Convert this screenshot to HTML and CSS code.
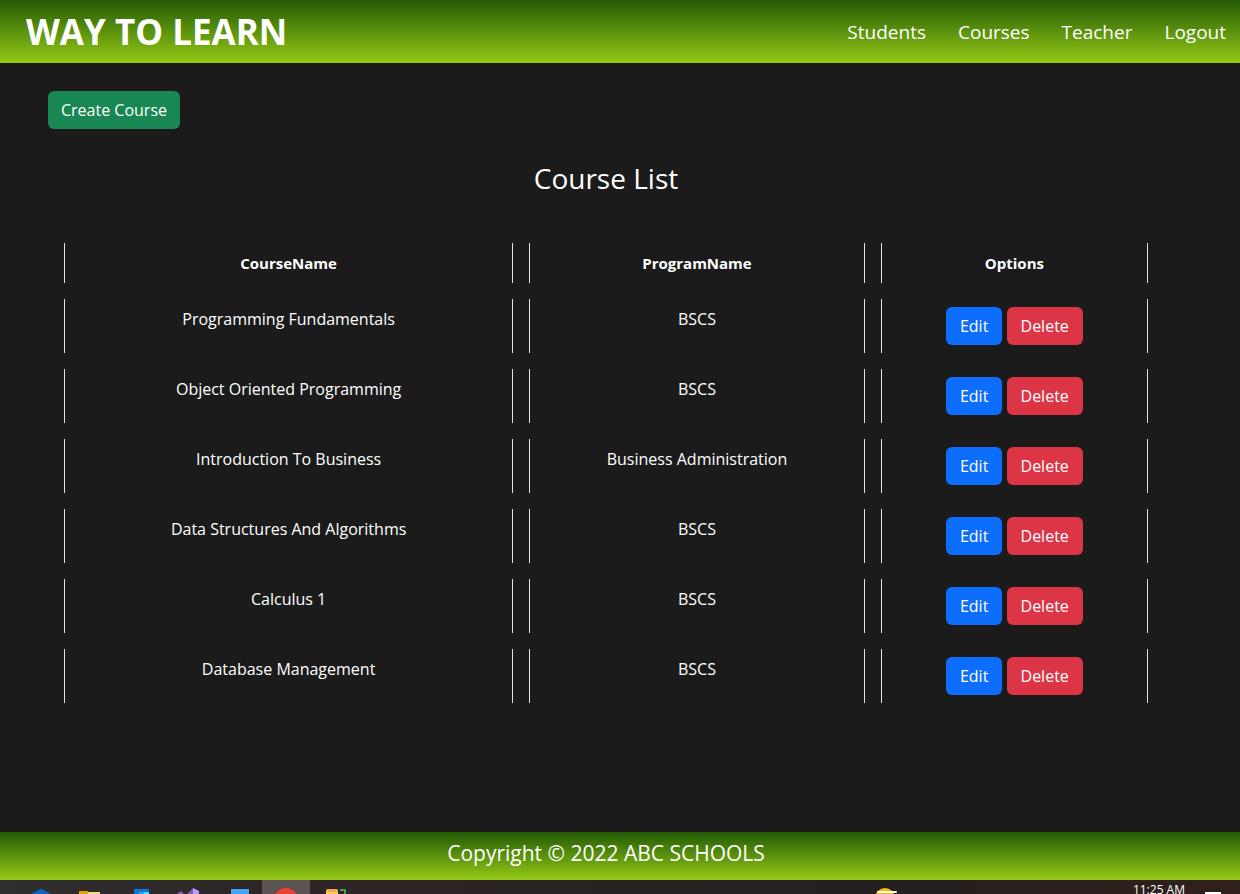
FILE: index.html
```html
<!DOCTYPE html>
<html lang="en">
<head>
<meta charset="utf-8">
<title>Course List</title>
<link rel="stylesheet" href="styles.css">
</head>
<body>
<header class="site-header">
  <h1 class="brand">WAY TO LEARN</h1>
  <nav class="site-nav">
    <a href="#">Students</a>
    <a href="#">Courses</a>
    <a href="#">Teacher</a>
    <a href="#">Logout</a>
  </nav>
</header>
<main class="content">
  <button class="btn btn-success" type="button">Create Course</button>
  <h2 class="page-title">Course List</h2>
  <table class="courses">
    <colgroup><col class="col-course"><col class="col-program"><col></colgroup>
    <thead>
      <tr><th>CourseName</th><th>ProgramName</th><th>Options</th></tr>
    </thead>
    <tbody>
      <tr><td>Programming Fundamentals</td><td>BSCS</td><td><button class="btn btn-primary" type="button">Edit</button> <button class="btn btn-danger" type="button">Delete</button></td></tr>
      <tr><td>Object Oriented Programming</td><td>BSCS</td><td><button class="btn btn-primary" type="button">Edit</button> <button class="btn btn-danger" type="button">Delete</button></td></tr>
      <tr><td>Introduction To Business</td><td>Business Administration</td><td><button class="btn btn-primary" type="button">Edit</button> <button class="btn btn-danger" type="button">Delete</button></td></tr>
      <tr><td>Data Structures And Algorithms</td><td>BSCS</td><td><button class="btn btn-primary" type="button">Edit</button> <button class="btn btn-danger" type="button">Delete</button></td></tr>
      <tr><td>Calculus 1</td><td>BSCS</td><td><button class="btn btn-primary" type="button">Edit</button> <button class="btn btn-danger" type="button">Delete</button></td></tr>
      <tr><td>Database Management</td><td>BSCS</td><td><button class="btn btn-primary" type="button">Edit</button> <button class="btn btn-danger" type="button">Delete</button></td></tr>
    </tbody>
  </table>
</main>
<footer class="site-footer">Copyright © 2022 ABC SCHOOLS</footer>
<div class="taskbar">
  <div class="apps">
    <span class="app"><svg viewBox="0 0 24 14"><path d="M12 8.500 22 14H2z" fill="#0a63b8"/></svg></span>
    <span class="app"><svg viewBox="0 0 24 14"><path d="M1 11h9v3H1z" fill="#e6a100"/><path d="M10 12h12v2H10z" fill="#f5d887"/></svg></span>
    <span class="app"><svg viewBox="0 0 24 14"><path d="M7 9h15v5H7z" fill="#0a78cf"/><path d="M12 12h5v2h-5z" fill="#28a8ea"/><path d="M17 12h5v2h-5z" fill="#50d9ff"/></svg></span>
    <span class="app"><svg viewBox="0 0 24 14"><path d="m1 14 4-3 3 3z" fill="#8661c5"/><path d="M11 14l6-6v6z" fill="#7b56b5"/><path d="M17 8l6 3v3h-6z" fill="#c09bf8"/></svg></span>
    <span class="app"><svg viewBox="0 0 24 14"><path d="M6 9h18v5H6z" fill="#42a5f5"/></svg></span>
    <span class="app active"><svg viewBox="0 0 24 14"><circle cx="12" cy="20" r="12" fill="#ea4335"/></svg></span>
    <span class="app"><svg viewBox="0 0 24 14"><rect x="3" y="9" width="12" height="8" rx="3" fill="#ffd04c"/><rect x="3" y="9" width="12" height="3" rx="2" fill="#f2a45c"/><path d="M17 10h5v4" fill="none" stroke="#43a047" stroke-width="2"/></svg></span>
  </div>
  <div class="tray">
    <svg class="weather" viewBox="0 0 24 14"><circle cx="11" cy="18" r="10" fill="#ffb900"/><path d="M4 12h7M11 12h11" stroke="#fff" stroke-width="2" stroke-linecap="round"/></svg>
    <time class="clock">11:25 AM</time>
    <svg class="notice" viewBox="0 0 16 14"><path d="M0 12h16v2H0z" fill="#fff"/></svg>
  </div>
</div>
</body>
</html>
```
FILE: styles.css
```css
* { box-sizing: border-box; }

body {
  margin: 0;
  min-height: 100vh;
  display: flex;
  flex-direction: column;
  background: #1b1b1b;
  color: #fff;
  font: 400 16px/24px "Open Sans", sans-serif;
}

.site-header,
.site-footer {
  background: linear-gradient(#235a04, #94ca16);
}

.site-header {
  display: flex;
  align-items: center;
  justify-content: space-between;
  padding: 10px 14px 9px 26px;
}

.brand {
  margin: 0;
  font-size: 35px;
  line-height: 44px;
  font-weight: 700;
}

.site-nav { display: flex; gap: 32px; }

.site-nav a {
  color: #fff;
  font-size: 19px;
  text-decoration: none;
}

.content {
  flex: 1;
  padding: 28px 76px 28px 48px;
}

.btn {
  padding: 6px 12px;
  border: 1px solid transparent;
  border-radius: 6px;
  color: #fff;
  font: inherit;
  vertical-align: top;
  cursor: pointer;
}

.courses .btn { padding: 6px 13px; }

.btn-success { background: #198754; }
.btn-primary { background: #0d6efd; }
.btn-danger { background: #dc3545; }

.page-title {
  margin: 32px 0;
  font-size: 28px;
  line-height: 34px;
  font-weight: 400;
  text-align: center;
}

.courses {
  width: 100%;
  table-layout: fixed;
  border-collapse: separate;
  border-spacing: 16px;
  text-align: center;
}

.col-course { width: 42.7%; }
.col-program { width: 31.9%; }

.courses th,
.courses td {
  padding: 8px;
  border: solid #dee2e6;
  border-width: 0 1px;
  vertical-align: top;
}

.courses th { font-size: 15px; }

.site-footer {
  padding: 9px 28px 15px 0;
  font-size: 21px;
  text-align: center;
}

.taskbar {
  display: flex;
  justify-content: space-between;
  height: 14px;
  overflow: hidden;
  background: linear-gradient(90deg, #302e2f, #2d2425 25%, #241f20 70%, #30201b);
}

.apps {
  display: flex;
  gap: 1px;
  padding-left: 17px;
}

.app {
  display: flex;
  justify-content: center;
  width: 48px;
}

.app svg,
.weather { width: 24px; height: 14px; }

.active { background: #5c5353; }

.tray {
  display: flex;
  padding-right: 19px;
}

.weather { margin-right: 235px; }

.clock {
  font-size: 12px;
  line-height: 20px;
  margin-right: 20px;
}

.notice { width: 16px; height: 14px; }
```
